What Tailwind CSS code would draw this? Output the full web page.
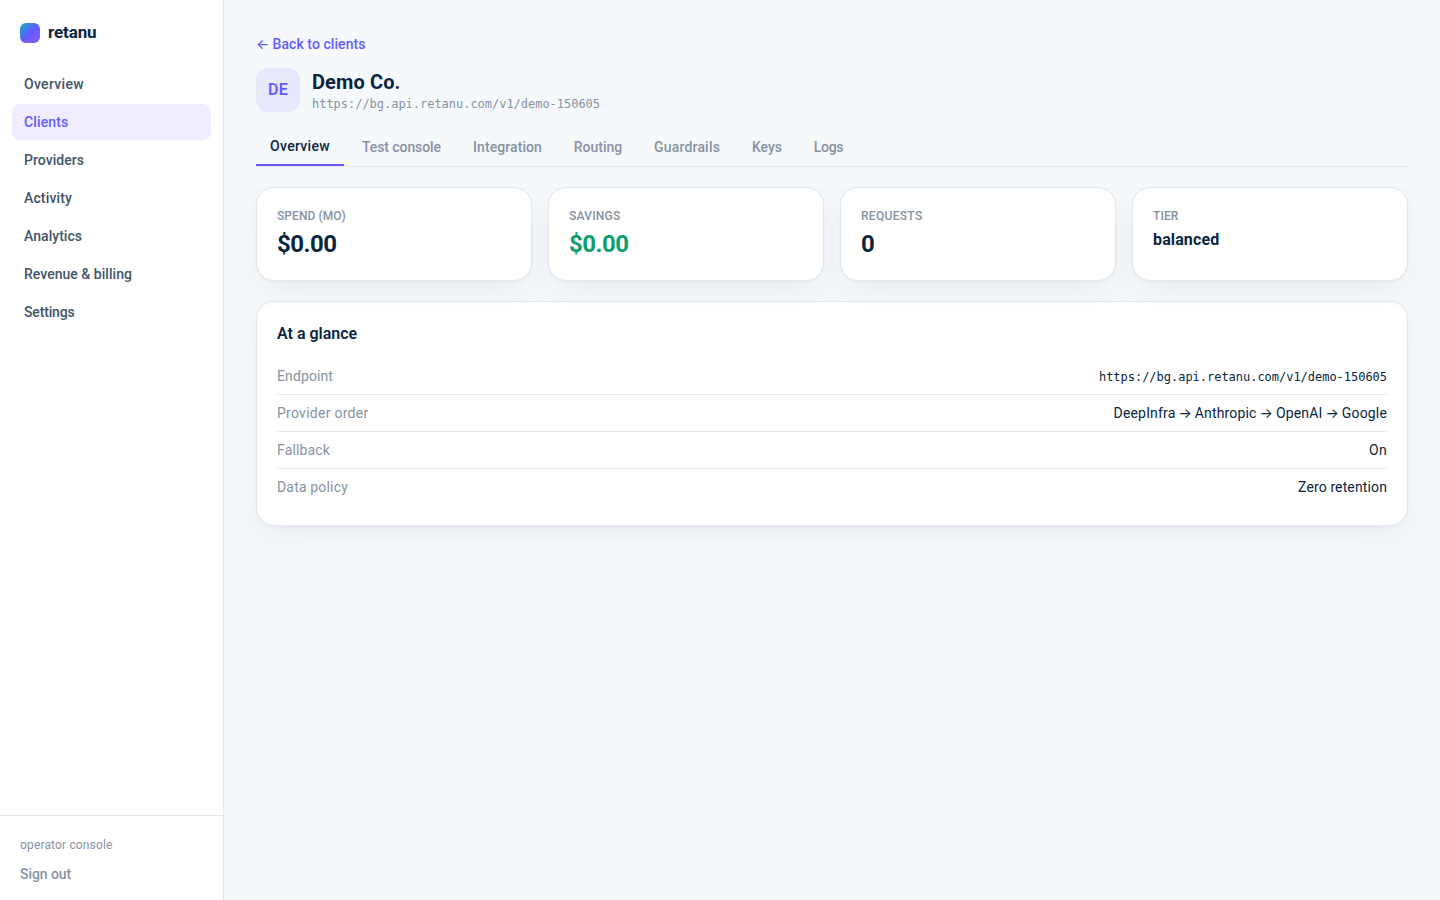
<!DOCTYPE html>
<html lang="en">
<head>
    <meta charset="UTF-8">
    <meta name="viewport" content="width=device-width, initial-scale=1.0">
    <title>retanu - Demo Co.</title>
    <script src="https://cdn.jsdelivr.net/npm/@tailwindcss/browser@4"></script>
</head>
<body class="bg-[#f6f9fc] text-[#0a2540] font-['Roboto',sans-serif] text-sm antialiased">
    <div class="flex h-screen">
        <!-- Sidebar -->
        <aside class="w-56 shrink-0 flex flex-col bg-white border-r border-[#e3e8ee]">
            <div class="flex items-center gap-2 px-5 h-[66px]">
                <span class="size-5 rounded-md bg-[linear-gradient(135deg,#11b5c4_0%,#635bff_50%,#8a5cf6_100%)]"></span>
                <span class="pb-0.5 text-[17px] leading-6 font-bold tracking-[-0.006em]">retanu</span>
            </div>
            <nav class="flex-1 flex flex-col gap-0.5 px-3 font-medium text-[#425466]">
                <a href="#" class="px-3 py-2 rounded-lg tracking-[0.022em]">Overview</a>
                <a href="#" class="px-3 py-2 rounded-lg tracking-[0.009em] bg-[#efedff] text-[#635bff]">Clients</a>
                <a href="#" class="px-3 py-2 rounded-lg tracking-[0.003em]">Providers</a>
                <a href="#" class="px-3 py-2 rounded-lg tracking-[0.010em]">Activity</a>
                <a href="#" class="px-3 py-2 rounded-lg tracking-[0.003em]">Analytics</a>
                <a href="#" class="px-3 py-2 rounded-lg tracking-[0.002em]">Revenue &amp; billing</a>
                <a href="#" class="px-3 py-2 rounded-lg tracking-[-0.011em]">Settings</a>
            </nav>
            <div class="border-t border-[#e3e8ee] px-5 pt-5 pb-4 text-[#8792a2]">
                <div class="text-xs leading-[18px] tracking-[0.013em]">operator console</div>
                <button class="block mt-2.5 font-medium tracking-[-0.005em]">Sign out</button>
            </div>
        </aside>

        <!-- Main content -->
        <main class="flex-1 px-8 pt-[34px]">
            <a href="#" class="block w-fit font-medium text-[#635bff] tracking-[0.005em]"><span class="inline-block w-4 mr-[0.5px] font-['Inter'] leading-none tracking-normal">←</span>Back to clients</a>

            <div class="flex items-center gap-3 mt-3.5">
                <div class="size-11 rounded-xl bg-[#635bff]/10 text-[#635bff] flex items-center justify-center text-base font-semibold tracking-[0.015em]">DE</div>
                <div>
                    <h1 class="text-xl leading-7 font-bold tracking-[0.006em]">Demo Co.</h1>
                    <div class="font-['DejaVu_Sans_Mono',monospace] text-xs tracking-[-0.002em] text-[#8792a2]">https://bg.api.retanu.com/v1/demo-150605</div>
                </div>
            </div>

            <div class="flex gap-1 mt-4 border-b border-[#e3e8ee] font-medium text-[#8792a2]">
                <button class="w-[88px] py-2 border-b-2 border-[#635bff] text-[#0a2540] tracking-[0.022em]">Overview</button>
                <button class="w-[107px] py-2 tracking-[-0.006em]">Test console</button>
                <button class="w-[97px] py-2 tracking-[0.006em]">Integration</button>
                <button class="w-[76px] py-2">Routing</button>
                <button class="w-[94px] py-2 tracking-[0.014em]">Guardrails</button>
                <button class="w-[58px] py-2">Keys</button>
                <button class="w-[57px] py-2 tracking-[-0.02em]">Logs</button>
            </div>

            <div class="grid grid-cols-4 gap-4 mt-5">
                <div class="bg-white border border-[#e3e8ee] rounded-[18px] p-5 shadow-[0_1px_3px_rgba(10,37,64,0.04),0_12px_32px_-8px_rgba(10,37,64,0.08)]">
                    <div class="text-xs font-medium text-[#8792a2] tracking-[0.006em]">SPEND (MO)</div>
                    <div class="mt-1 text-2xl font-bold tracking-[-0.02em]">$0.00</div>
                </div>
                <div class="bg-white border border-[#e3e8ee] rounded-[18px] p-5 shadow-[0_1px_3px_rgba(10,37,64,0.04),0_12px_32px_-8px_rgba(10,37,64,0.08)]">
                    <div class="text-xs font-medium text-[#8792a2] tracking-[0.02em]">SAVINGS</div>
                    <div class="mt-1 text-2xl font-bold text-[#0e9f6e] tracking-[-0.02em]">$0.00</div>
                </div>
                <div class="bg-white border border-[#e3e8ee] rounded-[18px] p-5 shadow-[0_1px_3px_rgba(10,37,64,0.04),0_12px_32px_-8px_rgba(10,37,64,0.08)]">
                    <div class="text-xs font-medium text-[#8792a2] tracking-[0.026em]">REQUESTS</div>
                    <div class="mt-1 text-2xl font-bold">0</div>
                </div>
                <div class="bg-white border border-[#e3e8ee] rounded-[18px] p-5 shadow-[0_1px_3px_rgba(10,37,64,0.04),0_12px_32px_-8px_rgba(10,37,64,0.08)]">
                    <div class="text-xs font-medium text-[#8792a2] tracking-[0.01em]">TIER</div>
                    <div class="mt-1 text-base font-bold tracking-[0.008em]">balanced</div>
                </div>
            </div>

            <div class="mt-5 bg-white border border-[#e3e8ee] rounded-[18px] p-5 shadow-[0_1px_3px_rgba(10,37,64,0.04),0_12px_32px_-8px_rgba(10,37,64,0.08)]">
                <h2 class="mb-3 text-base font-semibold">At a glance</h2>
                <div class="flex items-center justify-between py-2 border-b border-[#e3e8ee]">
                    <span class="text-[#8792a2] tracking-[0.008em]">Endpoint</span>
                    <span class="pt-0.5 font-['DejaVu_Sans_Mono',monospace] text-xs leading-[18px] tracking-[-0.002em]">https://bg.api.retanu.com/v1/demo-150605</span>
                </div>
                <div class="flex items-center justify-between py-2 border-b border-[#e3e8ee]">
                    <span class="text-[#8792a2] tracking-[0.019em]">Provider order</span>
                    <span class="tracking-[0.012em]">DeepInfra <span class="inline-flex w-3 justify-center font-['Inter'] leading-none tracking-normal">→</span> Anthropic <span class="inline-flex w-3 justify-center font-['Inter'] leading-none tracking-normal">→</span> OpenAI <span class="inline-flex w-3 justify-center font-['Inter'] leading-none tracking-normal">→</span> Google</span>
                </div>
                <div class="flex items-center justify-between py-2 border-b border-[#e3e8ee]">
                    <span class="text-[#8792a2] tracking-[0.01em]">Fallback</span>
                    <span class="tracking-[0.02em]">On</span>
                </div>
                <div class="flex items-center justify-between py-2">
                    <span class="text-[#8792a2] tracking-[0.012em]">Data policy</span>
                    <span class="tracking-[0.009em]">Zero retention</span>
                </div>
            </div>
        </main>
    </div>
</body>
</html>
